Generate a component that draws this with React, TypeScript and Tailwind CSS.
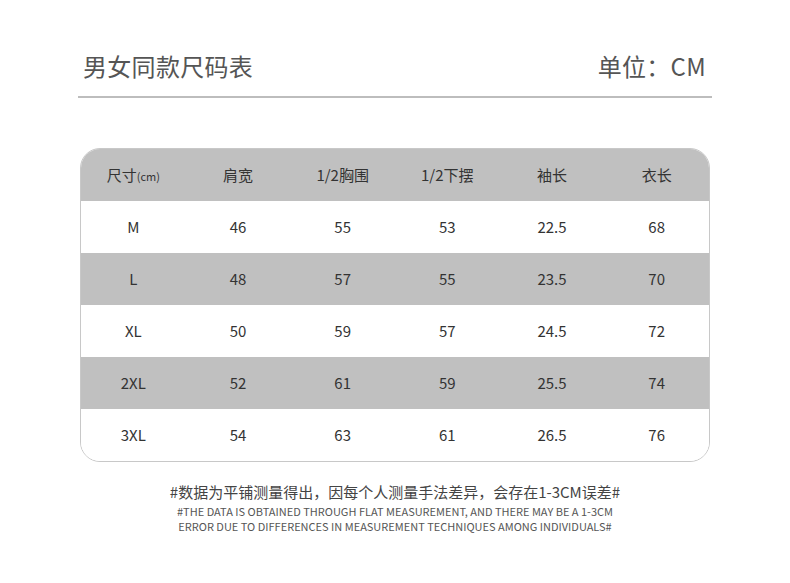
import React from "react";

const font = { fontFamily: '"Noto Sans CJK SC", "Noto Sans", sans-serif' };

const rows = [
  ["M", "46", "55", "53", "22.5", "68"],
  ["L", "48", "57", "55", "23.5", "70"],
  ["XL", "50", "59", "57", "24.5", "72"],
  ["2XL", "52", "61", "59", "25.5", "74"],
  ["3XL", "54", "63", "61", "26.5", "76"],
];

export default function App() {
  return (
    <div className="w-[790px] h-[583px] bg-white font-['Noto_Sans_CJK_SC',sans-serif]" style={font}>
      <div className="pt-[48px] px-[80px]">
        <div className="flex items-center justify-between h-[36px] pl-[3px] pr-[4px]">
          <div className="text-[24px] text-[#555] tracking-[0.3px]">男女同款尺码表</div>
          <div className="text-[24px] text-[#555] tracking-[0.3px]">单位：CM</div>
        </div>
        <div className="mt-[12px] h-[2px] bg-[#bdbdbd] -mx-[2px]" />
      </div>
      <div className="mt-[50px] mx-[80px] w-[630px] rounded-[20px] border border-[#c8c8c8] overflow-hidden">
        <div className="grid grid-cols-6 h-[52px] items-center bg-[#c0c0c0] text-[15px] text-[#333]">
          <div className="text-center">
            尺寸<span className="text-[11px]">(cm)</span>
          </div>
          <div className="text-center">肩宽</div>
          <div className="text-center">1/2胸围</div>
          <div className="text-center">1/2下摆</div>
          <div className="text-center">袖长</div>
          <div className="text-center">衣长</div>
        </div>
        {rows.map((r, i) => (
          <div
            key={i}
            className={
              i % 2 === 1
                ? "grid grid-cols-6 h-[52px] items-center bg-[#c0c0c0] text-[15px] text-[#333]"
                : "grid grid-cols-6 h-[52px] items-center bg-white text-[15px] text-[#333]"
            }
          >
            {r.map((c, j) => (
              <div key={j} className="text-center">
                {c}
              </div>
            ))}
          </div>
        ))}
      </div>
      <div className="mt-[19px] text-center text-[15px] text-[#444] leading-[22px]">
        #数据为平铺测量得出，因每个人测量手法差异，会存在1-3CM误差#
      </div>
      <div className="mt-[1px] text-center text-[11px] text-[#555] leading-[15px]">
        #THE DATA IS OBTAINED THROUGH FLAT MEASUREMENT, AND THERE MAY BE A 1-3CM
        <br />
        ERROR DUE TO DIFFERENCES IN MEASUREMENT TECHNIQUES AMONG INDIVIDUALS#
      </div>
    </div>
  );
}
